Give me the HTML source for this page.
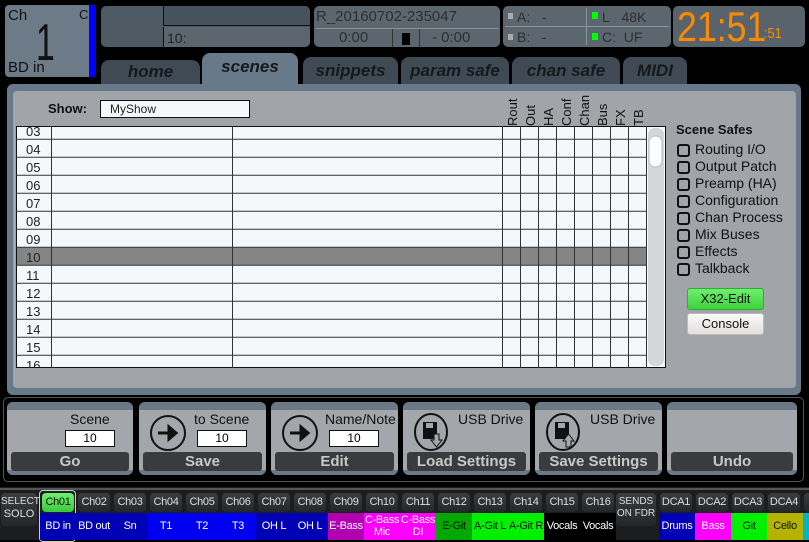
<!DOCTYPE html>
<html><head><meta charset="utf-8"><style>
*{margin:0;padding:0;box-sizing:border-box}
body{width:809px;height:540px;background:#000;position:relative;overflow:hidden;font-family:"Liberation Sans",sans-serif}
.a{position:absolute}
.tab{position:absolute;top:57px;height:28px;background:#3f4a54;border-radius:8px 8px 0 0;color:#15191c;font-weight:bold;font-style:italic;font-size:17px;text-align:center;line-height:28px}
.hd{position:absolute;top:92px;width:18px;height:34px;font-size:13px;color:#111}
.hd span{position:absolute;left:3px;bottom:0;transform-origin:left bottom;transform:rotate(-90deg) translate(0,15px);white-space:nowrap}
.cb{position:absolute;left:677px;width:13px;height:13px;border:2px solid #111;border-radius:3px}
.cl{position:absolute;left:695px;font-size:14px;color:#111}
.bb{position:absolute;top:402px;height:73px;background:#a3a7ab;border-radius:6px;overflow:hidden}
.bb .t{position:absolute;left:0;right:0;top:0;height:8px;background:#6b7987}
.bb .b{position:absolute;left:0;right:0;bottom:0;height:5px;background:#6b7987}
.bb .k{position:absolute;left:4px;right:4px;top:50px;height:19px;background:#3a3b3c;border-radius:3px;color:#c8c8c8;font-weight:bold;font-size:15px;text-align:center;line-height:19px}
.bb .n{position:absolute;height:17px;width:50px;background:#fff;border:1px solid #111;font-size:12px;text-align:center;line-height:15px;top:28px}
.bb .l{position:absolute;font-size:14px;color:#111;top:9px}
.ch{position:absolute;top:493px;width:32px;height:19px;background:linear-gradient(#3a3d3e,#242728);border-radius:4px;color:#ddd;font-size:11px;text-align:center;line-height:19px;letter-spacing:-0.3px}
.lb{position:absolute;top:513px;height:27px;width:36px;color:#fff;font-size:11px;text-align:center;line-height:12px;padding-top:7px;overflow:hidden;white-space:nowrap;letter-spacing:-0.3px}
</style></head><body>
<div class="a" style="left:5px;top:5px;width:91px;height:72px;background:#6d7b89;border-radius:4px"></div>
<div class="a" style="left:89px;top:5px;width:7px;height:72px;background:#0000ff"></div>
<div class="a" style="left:8px;top:7px;font-size:15px;color:#111">Ch</div>
<div class="a" style="left:79px;top:7px;font-size:13px;color:#111">C</div>
<div class="a" style="left:36px;top:13px;font-size:52px;color:#111;transform:scaleX(0.65);transform-origin:left top">1</div>
<div class="a" style="left:8px;top:59px;font-size:15px;color:#111">BD in</div>
<div class="a" style="left:101px;top:6px;width:209px;height:41px;background:#4e5a64;border-radius:5px;overflow:hidden">
 <div class="a" style="left:62px;top:0;width:147px;height:20px;background:#46525c;border-left:1px solid #111;border-bottom:1px solid #111"></div>
 <div class="a" style="left:62px;top:21px;width:147px;height:20px;background:#5a656e;border-left:1px solid #111"></div>
 <div class="a" style="left:66px;top:24px;font-size:14px;color:#222">10:</div>
</div>
<div class="a" style="left:314px;top:6px;width:186px;height:41px;background:#5c666f;border-radius:5px">
 <div class="a" style="left:2px;top:2px;font-size:15px;color:#2a2f33">R_20160702-235047</div>
 <div class="a" style="left:2px;top:22px;width:182px;height:1px;background:#8a949c"></div>
 <div class="a" style="left:78px;top:23px;width:1px;height:18px;background:#333"></div>
 <div class="a" style="left:105px;top:23px;width:1px;height:18px;background:#333"></div>
 <div class="a" style="left:25px;top:23px;font-size:15px;color:#2a2f33">0:00</div>
 <div class="a" style="left:88px;top:27px;width:8px;height:12px;background:#000"></div>
 <div class="a" style="left:118px;top:23px;font-size:15px;color:#2a2f33">- 0:00</div>
</div>
<div class="a" style="left:503px;top:6px;width:168px;height:41px;background:#5c666f;border-radius:5px;font-size:14px;color:#2a2f33">
 <div class="a" style="left:83px;top:2px;width:1px;height:37px;background:#8a949c"></div>
 <div class="a" style="left:2px;top:20px;width:164px;height:1px;background:#8a949c"></div>
 <div class="a" style="left:5px;top:7px;width:5px;height:6px;background:#aaa"></div>
 <div class="a" style="left:14px;top:3px">A:&nbsp;&nbsp;&nbsp;-</div>
 <div class="a" style="left:5px;top:28px;width:5px;height:6px;background:#aaa"></div>
 <div class="a" style="left:14px;top:23px">B:&nbsp;&nbsp;&nbsp;-</div>
 <div class="a" style="left:89px;top:6px;width:6px;height:7px;background:#00ff00"></div>
 <div class="a" style="left:99px;top:3px">L&nbsp;&nbsp; 48K</div>
 <div class="a" style="left:89px;top:27px;width:6px;height:7px;background:#00ff00"></div>
 <div class="a" style="left:99px;top:23px">C:&nbsp; UF</div>
</div>
<div class="a" style="left:673px;top:6px;width:132px;height:41px;background:#59636c;border-radius:5px">
 <div class="a" style="left:4px;top:-3px;font-size:42px;color:#ff8a00;transform:scaleX(0.85);transform-origin:left top">21:51</div>
 <div class="a" style="left:91px;top:19px;font-size:15px;color:#ff8a00;transform:scaleX(0.85);transform-origin:left top">:51</div>
</div>
<div class="tab" style="left:101px;width:99px;top:60px;line-height:24px">home</div>
<div class="tab" style="left:202px;width:96px;top:53px;height:34px;background:#68798a;line-height:28px">scenes</div>
<div class="tab" style="left:303px;width:95px">snippets</div>
<div class="tab" style="left:401px;width:108px">param safe</div>
<div class="tab" style="left:512px;width:108px">chan safe</div>
<div class="tab" style="left:623px;width:64px">MIDI</div>
<div class="a" style="left:7px;top:84px;width:794px;height:311px;background:#68798a;border-radius:6px"></div>
<div class="a" style="left:13px;top:91px;width:783px;height:297px;background:#a1a4a8;border-radius:4px"></div>
<div class="a" style="left:48px;top:101px;font-size:13px;font-weight:bold;color:#111">Show:</div>
<div class="a" style="left:100px;top:100px;width:150px;height:18px;background:#f4f8fa;border:1px solid #111;font-size:12px;padding-left:9px;line-height:16px;color:#222">MyShow</div>
<div class="hd" style="left:502px"><span>Rout</span></div>
<div class="hd" style="left:520px"><span>Out</span></div>
<div class="hd" style="left:538px"><span>HA</span></div>
<div class="hd" style="left:556px"><span>Conf</span></div>
<div class="hd" style="left:574px"><span>Chan</span></div>
<div class="hd" style="left:592px"><span>Bus</span></div>
<div class="hd" style="left:610px"><span>FX</span></div>
<div class="hd" style="left:628px"><span>TB</span></div>
<svg class="a" style="left:16px;top:126px" width="650" height="242">
<rect x="0.5" y="0.5" width="649" height="241" fill="#f4f8fa" stroke="#111"/>
<rect x="1" y="121.3" width="630" height="18" fill="#858585"/>
<g stroke="#333" stroke-width="1">
<line x1="0" y1="13.3" x2="631" y2="13.3"/><line x1="0" y1="31.3" x2="631" y2="31.3"/><line x1="0" y1="49.3" x2="631" y2="49.3"/><line x1="0" y1="67.3" x2="631" y2="67.3"/><line x1="0" y1="85.3" x2="631" y2="85.3"/><line x1="0" y1="103.3" x2="631" y2="103.3"/><line x1="0" y1="121.3" x2="631" y2="121.3"/><line x1="0" y1="139.3" x2="631" y2="139.3"/><line x1="0" y1="157.3" x2="631" y2="157.3"/><line x1="0" y1="175.3" x2="631" y2="175.3"/><line x1="0" y1="193.3" x2="631" y2="193.3"/><line x1="0" y1="211.3" x2="631" y2="211.3"/><line x1="0" y1="229.3" x2="631" y2="229.3"/>
<line x1="35.5" y1="0" x2="35.5" y2="242"/><line x1="216.5" y1="0" x2="216.5" y2="242"/>
<line x1="486.5" y1="0" x2="486.5" y2="242"/><line x1="504.5" y1="0" x2="504.5" y2="242"/><line x1="522.5" y1="0" x2="522.5" y2="242"/><line x1="540.5" y1="0" x2="540.5" y2="242"/><line x1="558.5" y1="0" x2="558.5" y2="242"/><line x1="576.5" y1="0" x2="576.5" y2="242"/><line x1="594.5" y1="0" x2="594.5" y2="242"/><line x1="612.5" y1="0" x2="612.5" y2="242"/><line x1="630.5" y1="0" x2="630.5" y2="242"/>
</g>
<rect x="632" y="2" width="16" height="238" rx="7" fill="#d4d6d8"/>
<rect x="633" y="10" width="13" height="31" rx="6" fill="#fbfcfc" stroke="#bbb"/>
<g font-family="Liberation Sans" font-size="13" fill="#222">
<text x="10" y="10">03</text><text x="10" y="28">04</text><text x="10" y="46">05</text><text x="10" y="64">06</text><text x="10" y="82">07</text><text x="10" y="100">08</text><text x="10" y="118">09</text><text x="10" y="136">10</text><text x="10" y="154">11</text><text x="10" y="172">12</text><text x="10" y="190">13</text><text x="10" y="208">14</text><text x="10" y="226">15</text><text x="10" y="244">16</text>
</g>
</svg>
<div class="a" style="left:676px;top:122px;font-size:13px;font-weight:bold;color:#111">Scene Safes</div>
<div class="cb" style="top:144px"></div><div class="cl" style="top:141px">Routing I/O</div>
<div class="cb" style="top:161px"></div><div class="cl" style="top:158px">Output Patch</div>
<div class="cb" style="top:178px"></div><div class="cl" style="top:175px">Preamp (HA)</div>
<div class="cb" style="top:195px"></div><div class="cl" style="top:192px">Configuration</div>
<div class="cb" style="top:212px"></div><div class="cl" style="top:209px">Chan Process</div>
<div class="cb" style="top:229px"></div><div class="cl" style="top:226px">Mix Buses</div>
<div class="cb" style="top:246px"></div><div class="cl" style="top:243px">Effects</div>
<div class="cb" style="top:263px"></div><div class="cl" style="top:260px">Talkback</div>
<div class="a" style="left:687px;top:288px;width:77px;height:22px;background:linear-gradient(#6cf06c,#3fd03f);border:1px solid #3a3;border-radius:3px;font-size:13px;text-align:center;line-height:20px;color:#111">X32-Edit</div>
<div class="a" style="left:687px;top:313px;width:77px;height:22px;background:linear-gradient(#fafafa,#e2e0dc);border:1px solid #bbb;border-radius:3px;font-size:13px;text-align:center;line-height:20px;color:#111">Console</div>
<div class="a" style="left:0;top:395px;width:809px;height:90px;background:#000"></div>
<div class="a" style="left:3px;top:397px;width:801px;height:85px;border:1px solid #555;border-radius:5px"></div>
<div class="bb" style="left:7px;width:126px"><div class="t"></div><div class="b"></div><div class="l" style="left:63px">Scene</div><div class="n" style="left:58px">10</div><div class="k">Go</div></div>
<div class="bb" style="left:139px;width:127px"><div class="t"></div><div class="b"></div>
<svg class="a" style="left:10px;top:12px" width="38" height="38"><circle cx="19" cy="19" r="17" fill="none" stroke="#111" stroke-width="2"/><path d="M9 19H24M20 13L27 19L20 25Z" stroke="#111" stroke-width="3" fill="#111"/></svg>
<div class="l" style="left:55px">to Scene</div><div class="n" style="left:58px">10</div><div class="k">Save</div></div>
<div class="bb" style="left:271px;width:127px"><div class="t"></div><div class="b"></div>
<svg class="a" style="left:10px;top:12px" width="38" height="38"><circle cx="19" cy="19" r="17" fill="none" stroke="#111" stroke-width="2"/><path d="M9 19H24M20 13L27 19L20 25Z" stroke="#111" stroke-width="3" fill="#111"/></svg>
<div class="l" style="left:54px">Name/Note</div><div class="n" style="left:58px">10</div><div class="k">Edit</div></div>
<div class="bb" style="left:403px;width:127px"><div class="t"></div><div class="b"></div>
<svg class="a" style="left:10px;top:10px" width="38" height="40"><ellipse cx="18" cy="20" rx="16" ry="18" fill="none" stroke="#111" stroke-width="2"/><path d="M10 10H24V27H10Z" fill="#111"/><rect x="13" y="11" width="7" height="5" fill="#a3a7ab"/><path d="M21 22H26V28H29L23.5 35L18 28H21Z" fill="#a3a7ab" stroke="#111"/></svg>
<div class="l" style="left:55px">USB Drive</div><div class="k">Load Settings</div></div>
<div class="bb" style="left:535px;width:127px"><div class="t"></div><div class="b"></div>
<svg class="a" style="left:10px;top:10px" width="38" height="40"><ellipse cx="18" cy="20" rx="16" ry="18" fill="none" stroke="#111" stroke-width="2"/><path d="M10 10H24V27H10Z" fill="#111"/><rect x="13" y="11" width="7" height="5" fill="#a3a7ab"/><path d="M21 35H26V29H29L23.5 22L18 29H21Z" fill="#a3a7ab" stroke="#111"/></svg>
<div class="l" style="left:55px">USB Drive</div><div class="k">Save Settings</div></div>
<div class="bb" style="left:667px;width:130px"><div class="t"></div><div class="b"></div><div class="k">Undo</div></div>
<div class="a" style="left:0;top:487px;width:809px;height:53px;background:#1c1d1e"></div>
<div class="a" style="left:0;top:488px;width:809px;height:2px;background:#555"></div>
<div class="a" style="left:1px;top:493px;width:36px;height:33px;background:linear-gradient(#3a3d3e,#242728);border-radius:4px;color:#ddd;font-size:10px;text-align:center;line-height:12px;padding-top:3px">SELECT<br><span style="font-size:11px">SOLO</span></div>
<div class="a" style="left:616px;top:493px;width:40px;height:33px;background:linear-gradient(#3a3d3e,#242728);border-radius:4px;color:#ddd;font-size:10px;text-align:center;line-height:12px;padding-top:3px">SENDS<br>ON FDR</div>
<div class="a" style="left:39px;top:490px;width:37px;height:52px;border:1px solid #ccc;border-radius:4px"></div>
<div class="ch" style="left:42px;background:linear-gradient(#6ef06e,#3cc83c);color:#111">Ch01</div>
<div class="ch" style="left:78px">Ch02</div><div class="ch" style="left:114px">Ch03</div><div class="ch" style="left:150px">Ch04</div><div class="ch" style="left:186px">Ch05</div><div class="ch" style="left:222px">Ch06</div><div class="ch" style="left:258px">Ch07</div><div class="ch" style="left:294px">Ch08</div><div class="ch" style="left:330px">Ch09</div><div class="ch" style="left:366px">Ch10</div><div class="ch" style="left:402px">Ch11</div><div class="ch" style="left:438px">Ch12</div><div class="ch" style="left:474px">Ch13</div><div class="ch" style="left:510px">Ch14</div><div class="ch" style="left:546px">Ch15</div><div class="ch" style="left:582px">Ch16</div>
<div class="ch" style="left:660px">DCA1</div><div class="ch" style="left:696px">DCA2</div><div class="ch" style="left:732px">DCA3</div><div class="ch" style="left:768px">DCA4</div><div class="ch" style="left:804px"></div>
<div class="lb" style="left:40px;background:#0000b4">BD in</div>
<div class="lb" style="left:76px;background:#0000b4">BD out</div>
<div class="lb" style="left:112px;background:#0000b4">Sn</div>
<div class="lb" style="left:148px;background:#0000f0">T1</div>
<div class="lb" style="left:184px;background:#0000f0">T2</div>
<div class="lb" style="left:220px;background:#0000f0">T3</div>
<div class="lb" style="left:256px;background:#0000b4">OH L</div>
<div class="lb" style="left:292px;background:#0000b4">OH L</div>
<div class="lb" style="left:328px;background:#b000b0">E-Bass</div>
<div class="lb" style="left:364px;background:#ff00ff;padding-top:1px">C-Bass<br>Mic</div>
<div class="lb" style="left:400px;background:#ff00ff;padding-top:1px">C-Bass<br>DI</div>
<div class="lb" style="left:436px;background:#00a800;color:#111">E-Git</div>
<div class="lb" style="left:472px;background:#00f000;color:#111">A-Git L</div>
<div class="lb" style="left:508px;background:#00f000;color:#111">A-Git R</div>
<div class="lb" style="left:544px;background:#000">Vocals</div>
<div class="lb" style="left:580px;background:#000">Vocals</div>
<div class="lb" style="left:659px;background:#0000b4">Drums</div>
<div class="lb" style="left:695px;background:#ff00ff">Bass</div>
<div class="lb" style="left:731px;background:#00f000;color:#111">Git</div>
<div class="lb" style="left:767px;background:#b4b400;color:#111">Cello</div>
<div class="lb" style="left:803px;background:#00b4c8;color:#111">T</div>
</body></html>
